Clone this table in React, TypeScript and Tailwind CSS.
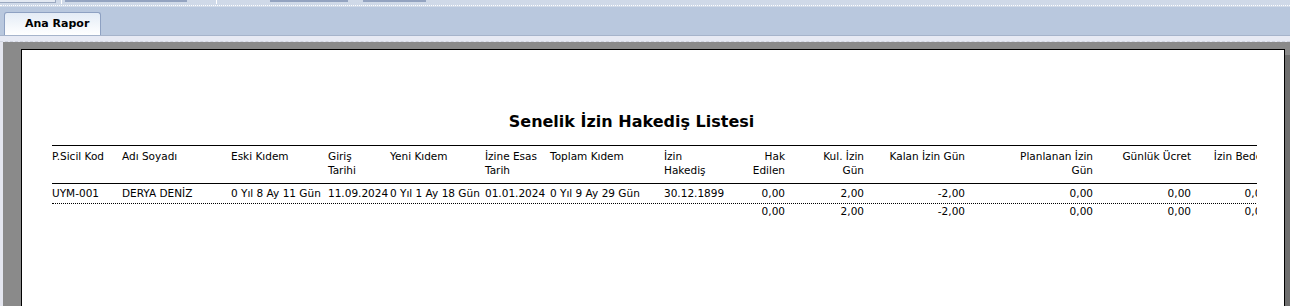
import React from 'react';

type Col = {
  w: string;
  right?: boolean;
  pad?: string;
  head: string[];
  data: string;
  total?: string;
};

const cols: Col[] = [
  { w: 'w-[70px]', head: ['P.Sicil Kod'], data: 'UYM-001' },
  { w: 'w-[109px]', head: ['Adı Soyadı'], data: 'DERYA DENİZ' },
  { w: 'w-[97px]', head: ['Eski Kıdem'], data: '0 Yıl 8 Ay 11 Gün' },
  { w: 'w-[61px]', head: ['Giriş', 'Tarihi'], data: '11.09.2024' },
  { w: 'w-[96px]', pad: 'pl-[1px]', head: ['Yeni Kıdem'], data: '0 Yıl 1 Ay 18 Gün' },
  { w: 'w-[65px]', head: ['İzine Esas', 'Tarih'], data: '01.01.2024' },
  { w: 'w-[114px]', head: ['Toplam Kıdem'], data: '0 Yıl 9 Ay 29 Gün' },
  { w: 'w-[66px]', head: ['İzin', 'Hakediş'], data: '30.12.1899' },
  { w: 'w-[55px]', right: true, head: ['Hak', 'Edilen'], data: '0,00', total: '0,00' },
  { w: 'w-[79px]', right: true, head: ['Kul. İzin', 'Gün'], data: '2,00', total: '2,00' },
  { w: 'w-[101px]', right: true, head: ['Kalan İzin Gün'], data: '-2,00', total: '-2,00' },
  { w: 'w-[128px]', right: true, head: ['Planlanan İzin', 'Gün'], data: '0,00', total: '0,00' },
  { w: 'w-[98px]', right: true, head: ['Günlük Ücret'], data: '0,00', total: '0,00' },
  { w: 'w-[77px]', right: true, head: ['İzin Bedeli'], data: '0,00', total: '0,00' },
];

const cellClass = (c: Col) =>
  `${c.w} ${c.pad ?? ''} shrink-0 whitespace-nowrap ${c.right ? 'text-right' : 'text-left'}`;

const TopStrip = () => (
  <div className="h-[7px] bg-[#cfd9e8] relative flex">
    <div className="w-[56px] h-[3px] bg-[#e3e9f2] border-b border-r border-[#9aa8c0]" />
    <div className="w-[1px] h-[4px] ml-[5px] bg-white" />
    <div className="w-[122px] h-[2px] ml-[3px] bg-[#93a3c0]" />
    <div className="w-[1px] h-[4px] ml-[29px] bg-white" />
    <div className="w-[78px] h-[2px] ml-[53px] bg-[#93a3c0]" />
    <div className="w-[63px] h-[2px] ml-[15px] bg-[#93a3c0]" />
    <div className="absolute left-0 right-0 top-[5px] h-[2px] border-t border-dotted border-white" />
  </div>
);

const TabBar = () => (
  <div className="h-[29px] bg-[#b9c8de] border-b border-[#a6b4cb] flex items-end pl-[4px]">
    <div className="w-[97px] h-[23px] rounded-t-[3px] border border-b-0 border-[#8ea1c2] bg-gradient-to-b from-[#e4ecf6] to-white flex items-center pl-[20px] text-[11px] font-bold text-black font-['DejaVu_Sans',sans-serif]">
      Ana Rapor
    </div>
  </div>
);

export default function App() {
  return (
    <div className="w-[1290px] h-[306px] overflow-hidden bg-[#8a8a8a] font-['DejaVu_Sans',sans-serif] text-black">
      <TopStrip />
      <TabBar />
      <div className="h-[6px] bg-[#e7eaf4] border-b border-dashed border-[#d0d4e0]" />
      <div className="flex h-[300px]">
        <div className="w-[3px] bg-[#e4e6ef]" />
        <div className="flex-1 pl-[18px] pt-[7px]">
          <div className="w-[1264px] h-[400px] bg-white border border-black shadow-[6px_6px_0_#6f6f6f] pl-[30px] pt-[62px]">
            <div className="w-[1205px] text-center pr-[46px] text-[16px] leading-[20px] font-bold">
              Senelik İzin Hakediş Listesi
            </div>
            <div className="w-[1205px] overflow-hidden mt-[13px] border-t border-black text-[10.5px] leading-[14px]">
              <div className="w-[1216px] flex border-b border-black pt-[3px] pb-[6px]">
                {cols.map((c, i) => (
                  <div key={i} className={cellClass(c)}>
                    {c.head.map((h, j) => (
                      <div key={j}>{h}</div>
                    ))}
                    {c.head.length === 1 && <div>&nbsp;</div>}
                  </div>
                ))}
              </div>
              <div className="w-[1216px] flex border-b border-dotted border-black pt-[2px] pb-[3px]">
                {cols.map((c, i) => (
                  <div key={i} className={cellClass(c)}>
                    {c.data}
                  </div>
                ))}
              </div>
              <div className="w-[1216px] flex">
                {cols.map((c, i) => (
                  <div key={i} className={cellClass(c)}>
                    {c.total ?? '\u00a0'}
                  </div>
                ))}
              </div>
            </div>
          </div>
        </div>
      </div>
    </div>
  );
}
